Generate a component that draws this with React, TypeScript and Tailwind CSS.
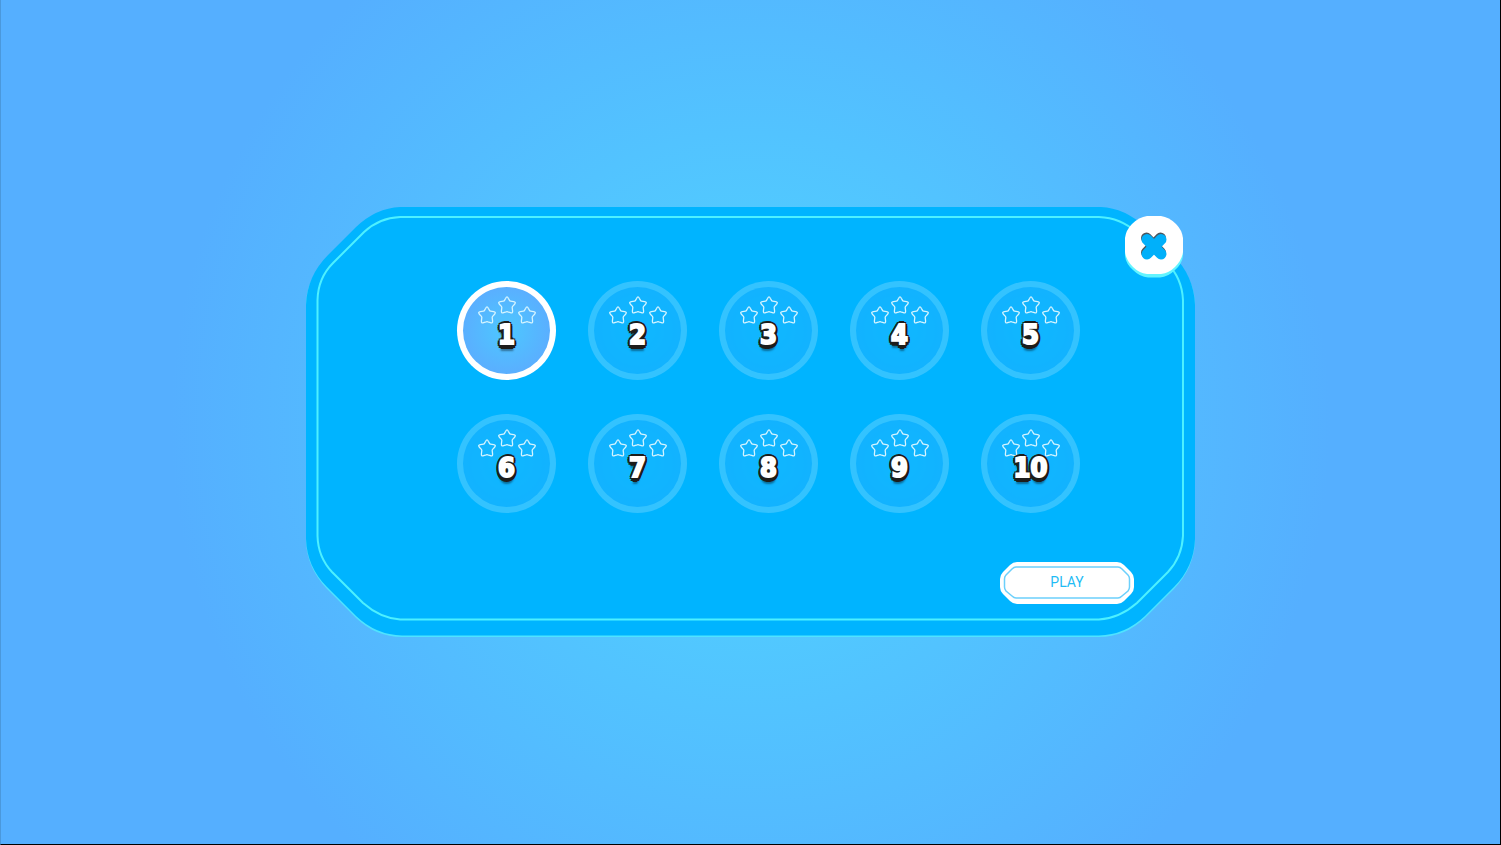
import { useState } from 'react';
import clsx from 'clsx';

const LEVELS = [1, 2, 3, 4, 5, 6, 7, 8, 9, 10];

function Star({ className }: { className?: string }) {
  return (
    <svg className={clsx('h-[18px] w-[18px]', className)} viewBox="0 0 18 18" fill="none" stroke="#d5f4ff" strokeWidth="1.3" strokeLinejoin="round">
      <path d="M7.7 2.2Q9 -.4 10.3 2.2L11.5 4.4Q11.8 5 12.5 5.1L15.6 5.6Q18.4 6.2 16.6 8.2L14.6 10.4Q14.1 11 14.2 11.6L14.6 15Q14.8 17.6 12.4 16.7L9.8 15.8Q9 15.5 8.2 15.8L5.6 16.7Q3.2 17.6 3.4 15L3.8 11.6Q3.9 11 3.4 10.4L1.4 8.2Q-.4 6.2 2.4 5.6L5.5 5.1Q6.2 5 6.5 4.4Z" />
    </svg>
  );
}

function PanelFrame() {
  return (
    <svg className="absolute inset-0 h-full w-full" viewBox="0 0 888 430" preserveAspectRatio="none" fill="none" aria-hidden="true">
      <path
        fill="#4fe3ff"
        d="M92 2H796Q820 3 838 22L866 50Q888 72 888 98V334Q887 361 867 382L838 411Q818 430 792 430H96Q70 430 50 411L21 382Q1 361 0 334V98Q0 72 22 50L50 22Q68 3 92 2Z"
      />
      <path
        fill="#00b4ff"
        d="M94 0H794Q818 1 838 20L866 48Q887 69 888 98V332Q887 360 867 380L838 409Q818 428 792 428.5H96Q70 428 50 409L21 380Q1 360 0 332V98Q1 69 22 48L50 20Q70 1 94 0Z"
      />
      <path
        stroke="#4df0ff"
        strokeWidth="2"
        d="M94 10H792Q814 11 829 25L860 56Q875 71 876 93V329Q875 350 861 365L830 396Q813 411 792 412.5H94Q74 411 57 396L26 365Q12 350 11.5 329V93Q12 71 27 56L58 25Q73 11 94 10Z"
      />
    </svg>
  );
}

interface LevelButtonProps {
  level: number;
  selected: boolean;
  onSelect: (level: number) => void;
}

function LevelButton({ level, selected, onSelect }: LevelButtonProps) {
  return (
    <button
      type="button"
      aria-label={`Level ${level}`}
      aria-pressed={selected}
      onClick={() => onSelect(level)}
      className="relative flex h-[99px] w-[99px] cursor-pointer flex-col items-center rounded-full pt-[15px]"
    >
      <span
        className={clsx(
          'absolute inset-0 rounded-full bg-white p-1.5',
          selected ? 'opacity-100' : 'opacity-20'
        )}
      >
        <span className="block h-full w-full rounded-full bg-[radial-gradient(circle,#4cc8ff_0%,#5aafff_70%)]" />
      </span>
      <span className="relative flex gap-0.5">
        <Star className="mt-2.5" />
        <Star />
        <Star className="mt-2.5" />
      </span>
      <span className="relative font-['DejaVu_Sans_Condensed','DejaVu_Sans',sans-serif] text-[27px] leading-[22px] font-bold text-white [-webkit-text-stroke:2px_white] [text-shadow:-2px_-2px_#1d1d1b,2px_-2px_#1d1d1b,0_-3px_#1d1d1b,-3px_0_#1d1d1b,3px_0_#1d1d1b,-3px_2px_#1d1d1b,3px_2px_#1d1d1b,-2px_4px_#1d1d1b,2px_4px_#1d1d1b,0_5px_#1d1d1b,0_7px_2px_#00000066]">
        {level}
      </span>
    </button>
  );
}

function CloseButton() {
  return (
    <button type="button" aria-label="Close" className="absolute top-[9px] right-3 h-[62px] w-[58px] cursor-pointer">
      <svg className="h-full w-full" viewBox="0 0 58 62" fill="none">
        <path fill="#62f4ff" d="M22 4H36Q44 5 51 12Q57 18 58 26V40Q57 48 50 54Q43 61 35 61.5H23Q15 61 8 54Q1 48 0 40V26Q1 18 7 12Q14 5 22 4Z" />
        <path fill="#fff" d="M22 0H36Q44 1 51 8Q57 14 58 22V36Q57 44 50 51Q44 57 36 58H22Q14 57 8 51Q1 44 0 36V22Q1 14 7 8Q14 1 22 0Z" />
        <path stroke="#4d565e" strokeWidth="11" strokeLinecap="round" d="M21.5 22L35.5 36.5M35.5 22L21.5 36.5" />
        <path stroke="#00b0fa" strokeWidth="11" strokeLinecap="round" d="M22 23.5L36 38M36 23.5L22 38" />
      </svg>
    </button>
  );
}

function PlayButton() {
  return (
    <button
      type="button"
      className="relative h-[42px] w-[134px] cursor-pointer pb-0.5 font-[Roboto,sans-serif] text-[14px] leading-5 text-[#1fbcf5]"
    >
      <svg className="absolute inset-0 h-full w-full" viewBox="0 0 134 42" fill="none" aria-hidden="true">
        <path fill="#fff" d="M17 0H117Q121 0 124 3L131 10Q134 13 134 17V25Q134 29 131 32L124 39Q121 42 117 42H17Q13 42 10 39L3 32Q0 29 0 25V17Q0 13 3 10L10 3Q13 0 17 0Z" />
        <path stroke="#6cd0fb" strokeWidth="1.5" d="M16 5H118Q120 5 122 7L128 13Q129.5 14.5 129.5 17V25Q129.5 27 128 29L122 34Q120 36 118 36H16Q14 36 12 34L6 29Q4.5 27 4.5 25V17Q4.5 14.5 6 13L12 7Q14 5 16 5Z" />
      </svg>
      <span className="relative">PLAY</span>
    </button>
  );
}

export default function App() {
  const [selected, setSelected] = useState(1);

  return (
    <main className="flex min-h-screen items-center justify-center border-r border-b border-l border-r-black border-b-black border-l-[#4a98dc] bg-[radial-gradient(circle_at_center,#4fd7ff_0px,#55afff_580px)]">
      <section aria-label="Select level" className="relative flex w-full max-w-[889px] flex-col pt-[74px] pb-[33px]">
        <PanelFrame />
        <div className="relative flex flex-wrap gap-x-8 gap-y-[34px] pr-[110px] pl-[151px]">
          {LEVELS.map((level) => (
            <LevelButton key={level} level={level} selected={level === selected} onSelect={setSelected} />
          ))}
        </div>
        <div className="relative mt-[49px] flex justify-end pr-[61px]">
          <PlayButton />
        </div>
        <CloseButton />
      </section>
    </main>
  );
}
